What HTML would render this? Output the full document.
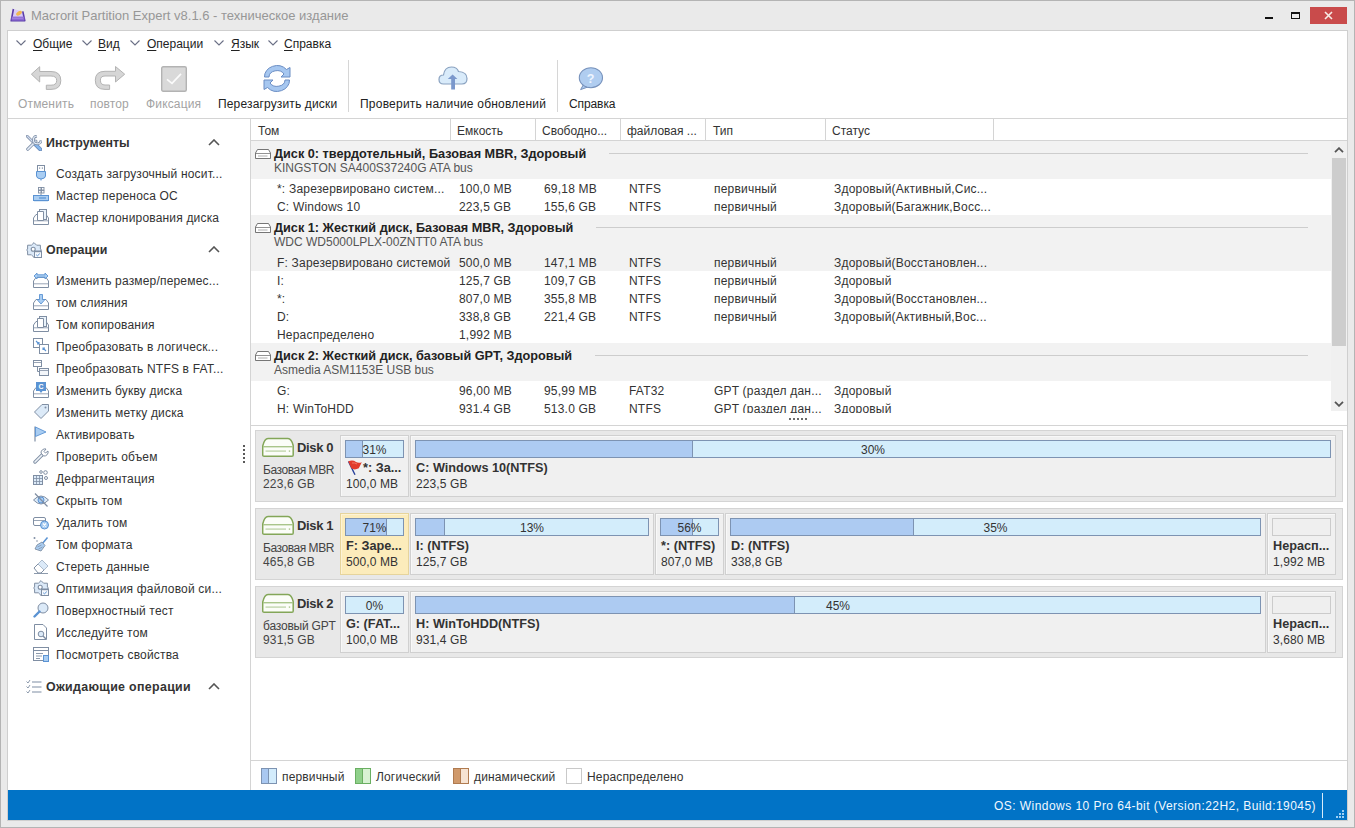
<!DOCTYPE html>
<html><head><meta charset="utf-8">
<style>
*{box-sizing:border-box;margin:0;padding:0}
html,body{width:1355px;height:828px;overflow:hidden;background:#eaeaea}
body{position:relative;font-family:"Liberation Sans",sans-serif;font-size:12px;color:#333}
.a{position:absolute;white-space:nowrap}
#frame{position:absolute;left:0;top:0;width:1355px;height:828px;border:1px solid #b4b4b4;background:#eaeaea}
#content{position:absolute;left:7px;top:30px;width:1341px;height:791px;border:1px solid #cfcfcf;background:#fff}
.title{left:31px;top:8px;font-size:13px;color:#979797}
.menu{top:37px;font-size:12px;color:#222}
.menu u{text-decoration:underline;text-decoration-thickness:1px;text-underline-offset:1.5px}
.chev{position:absolute;top:40px;width:10px;height:6px}
.tbl{top:97px;font-size:12px;color:#222;letter-spacing:.15px}
.tbl.dis{color:#a3a3a3}
.sep{position:absolute;width:1px;background:#d6d6d6}
.hl{position:absolute;height:1px;background:#d4d4d4}
.vl{position:absolute;width:1px;background:#d4d4d4}
.lp{font-size:12px;color:#333;letter-spacing:.18px}
.lph{font-size:12.4px;font-weight:bold;color:#333}
.th{top:124px;color:#333}
.dh{font-weight:bold;color:#222;font-size:12.7px}
.dsub{color:#555}
.c{color:#333;letter-spacing:.2px}
.part{background:#f0f0f0;border:1px solid #d0d0d0;box-shadow:inset 1px 1px 0 #f8f8f8}
.part.sel{background:#fcecbb;border-color:#e6d49c;box-shadow:inset 1px 1px 0 #fdf3d6}
</style></head><body>
<div id="frame"></div>
<div id="content"></div>

<svg class="a" style="left:10px;top:8px" width="16" height="14" viewBox="0 0 16 14">
<path d="M3.4 1 L1.2 12.8 H14.8 L12.8 3.4" fill="#d9ccf6" stroke="#5a3ca8" stroke-width="1.6" stroke-linejoin="round"/>
<ellipse cx="9" cy="5.2" rx="3.2" ry="1.9" transform="rotate(-35 9 5.2)" fill="#f0b850"/>
<rect x="1.6" y="8.6" width="12.8" height="4" fill="#8c6ad2"/>
<path d="M2 10.2 H13" stroke="#a88ae6" stroke-width="1"/>
</svg>
<div class="a title">Macrorit Partition Expert v8.1.6 - техническое издание</div>
<div class="a" style="left:1265px;top:17px;width:8px;height:2px;background:#111"></div>
<div class="a" style="left:1291px;top:12px;width:9px;height:7px;border:1px solid #111;border-top:2px solid #111"></div>
<div class="a" style="left:1310px;top:7px;width:37px;height:17px;background:#c94b4b"></div>
<svg class="a" style="left:1323px;top:10px" width="11" height="11" viewBox="0 0 11 11"><path d="M2 2 L9 9 M9 2 L2 9" stroke="#f7ece6" stroke-width="1.6"/></svg>

<svg class="chev" style="left:16px" viewBox="0 0 10 6"><path d="M.5 .5 L5 5 L9.5 .5" fill="none" stroke="#6a6f85" stroke-width="1.1"/></svg>
<div class="a menu" style="left:33px"><u>О</u>бщие</div>
<svg class="chev" style="left:82px" viewBox="0 0 10 6"><path d="M.5 .5 L5 5 L9.5 .5" fill="none" stroke="#6a6f85" stroke-width="1.1"/></svg>
<div class="a menu" style="left:98px"><u>В</u>ид</div>
<svg class="chev" style="left:130px" viewBox="0 0 10 6"><path d="M.5 .5 L5 5 L9.5 .5" fill="none" stroke="#6a6f85" stroke-width="1.1"/></svg>
<div class="a menu" style="left:147px"><u>О</u>перации</div>
<svg class="chev" style="left:214px" viewBox="0 0 10 6"><path d="M.5 .5 L5 5 L9.5 .5" fill="none" stroke="#6a6f85" stroke-width="1.1"/></svg>
<div class="a menu" style="left:231px"><u>Я</u>зык</div>
<svg class="chev" style="left:268px" viewBox="0 0 10 6"><path d="M.5 .5 L5 5 L9.5 .5" fill="none" stroke="#6a6f85" stroke-width="1.1"/></svg>
<div class="a menu" style="left:284px"><u>С</u>правка</div>
<svg class="a" style="left:30px;top:66px" width="34" height="26" viewBox="0 0 34 26">
<path d="M1.4 8.2 L9.7 0.7 V5.5 H21 Q30.8 5.5 30.8 14.5 Q30.8 23.4 21 23.4 H16.3 V19.2 H21 Q26.7 19.2 26.7 14.5 Q26.7 10 21 10 H9.7 V16 Z" fill="#d6d6d6" stroke="#b3b3b3" stroke-width="1"/>
</svg>
<svg class="a" style="left:93px;top:66px" width="34" height="26" viewBox="0 0 34 26">
<path d="M31.7 8.2 L22.5 0.5 V5.3 H12 Q2.3 5.3 2.3 14.2 Q2.3 23.4 12 23.4 H16.6 V19 H12 Q7.4 19 7.4 14.2 Q7.4 10 12 10 H22.5 V16 Z" fill="#d6d6d6" stroke="#b3b3b3" stroke-width="1"/>
</svg>
<svg class="a" style="left:161px;top:66px" width="26" height="26" viewBox="0 0 26 26">
<rect x="0.7" y="0.7" width="24.6" height="24.6" rx="1.5" fill="#d9d9d9" stroke="#b3b3b3" stroke-width="1.4"/>
<path d="M6 13.3 L11 17.4 L20 7.8" fill="none" stroke="#fbfbfb" stroke-width="1.7"/>
</svg>
<svg class="a" style="left:255px;top:60px" width="40" height="36" viewBox="0 0 40 36">
<path d="M9.5 17 A12.5 11 0 0 1 31.5 9.5 L35 7.5 V17 H26 L29 14 A8 6.5 0 0 0 14 17 Z" fill="#a6c7f0" stroke="#6a8dc4" stroke-width="1"/>
<path d="M34.5 20 A12.5 11 0 0 1 12.5 27.5 L9 29.5 V20 H18 L15 23 A8 6.5 0 0 0 30 20 Z" fill="#a6c7f0" stroke="#6a8dc4" stroke-width="1"/>
</svg>
<svg class="a" style="left:438px;top:66px" width="32" height="26" viewBox="0 0 32 26">
<path d="M5.5 18 Q1 18 1 13.5 Q1 9 5.5 9 Q6.5 1 13.5 1 Q19 1 20.5 5.5 Q29 6 29 12.5 Q29 18 24 18 Z" fill="#d9ebfa" stroke="#8aa2c0" stroke-width="1.2"/>
<path d="M14.6 8.5 L9.8 12.9 H13.2 V23.4 H17 V12.9 H19.4 Z" fill="#7b98cc"/>
</svg>
<svg class="a" style="left:577px;top:66px" width="28" height="26" viewBox="0 0 28 26">
<path d="M6.5 18.5 L3.6 23.6 L11.5 20.8 Z" fill="#a9c7ee" stroke="#7792bc" stroke-width="1"/>
<ellipse cx="13.9" cy="11.7" rx="11.6" ry="10" fill="#b0cdf0" stroke="#7792bc" stroke-width="1.1"/>
<path d="M7 18 L11.8 20.2" stroke="#b0cdf0" stroke-width="2"/>
<text x="13.5" y="16.5" text-anchor="middle" font-family="Liberation Sans" font-weight="bold" font-size="12.5" fill="#eef5ff">?</text>
</svg>
<div class="a tbl dis" style="left:18px">Отменить</div>
<div class="a tbl dis" style="left:90px">повтор</div>
<div class="a tbl dis" style="left:146px">Фиксация</div>
<div class="a tbl" style="left:218px">Перезагрузить диски</div>
<div class="sep" style="left:348px;top:60px;height:52px"></div>
<div class="a tbl" style="left:360px;letter-spacing:.22px">Проверить наличие обновлений</div>
<div class="sep" style="left:557px;top:60px;height:52px"></div>
<div class="a tbl" style="left:569px;letter-spacing:-.1px">Справка</div>
<div class="hl" style="left:8px;top:118px;width:1339px"></div>
<div class="vl" style="left:250px;top:119px;height:671px"></div>

<svg class="a" style="left:26px;top:135px" width="16" height="16" viewBox="0 0 16 16"><path d="M1.2 1.2 L7.5 7.5" stroke="#8494ab" stroke-width="2.8" stroke-linecap="round"/><path d="M1.2 1.2 L7.5 7.5" stroke="#d3def3" stroke-width="1.2" stroke-linecap="round"/><path d="M8.5 8.5 L14.3 14.3" stroke="#6f8fbd" stroke-width="4" stroke-linecap="round"/><path d="M8.5 8.5 L14.3 14.3" stroke="#86b8ee" stroke-width="2.3" stroke-linecap="round"/><path d="M1.8 14.2 L9.8 6.2" stroke="#8494ab" stroke-width="3.2" stroke-linecap="round"/><path d="M1.8 14.2 L9.8 6.2" stroke="#e6eef9" stroke-width="1.6" stroke-linecap="round"/><path d="M11 1 A3.9 3.9 0 1 0 15.2 5.2" fill="none" stroke="#8494ab" stroke-width="2.8"/><path d="M11 1 A3.9 3.9 0 1 0 15.2 5.2" fill="none" stroke="#e6eef9" stroke-width="1.1"/></svg>
<div class="a lph" style="left:46px;top:136px;letter-spacing:0px">Инструменты</div>
<svg class="a" style="left:208px;top:139px" width="12" height="7" viewBox="0 0 12 7"><path d="M1 6 L6 1 L11 6" fill="none" stroke="#555" stroke-width="1.6"/></svg>
<svg class="a" style="left:33px;top:165px" width="16" height="16" viewBox="0 0 16 16"><rect x="4.5" y="0.5" width="7" height="6" fill="#fff" stroke="#7f8ea3"/><rect x="6" y="2.5" width="1.2" height="1.2" fill="#7f8ea3"/><rect x="8.8" y="2.5" width="1.2" height="1.2" fill="#7f8ea3"/><path d="M3.5 6.5 H12.5 V11 Q12.5 13.5 8 14 Q3.5 13.5 3.5 11 Z" fill="#a9cdf2" stroke="#5b93d3"/><path d="M8 14 V15.5" stroke="#5b93d3"/></svg>
<div class="a lp" style="left:56px;top:167px">Создать загрузочный носит...</div>
<svg class="a" style="left:33px;top:187px" width="16" height="16" viewBox="0 0 16 16"><rect x="5.5" y="0.5" width="2.5" height="2.5" fill="#fff" stroke="#7f8ea3" stroke-width=".9"/><rect x="8.5" y="0.5" width="2.5" height="2.5" fill="#fff" stroke="#7f8ea3" stroke-width=".9"/><rect x="5.5" y="3.5" width="2.5" height="2.5" fill="#fff" stroke="#7f8ea3" stroke-width=".9"/><rect x="8.5" y="3.5" width="2.5" height="2.5" fill="#fff" stroke="#7f8ea3" stroke-width=".9"/><path d="M8 6.5 V8.5" stroke="#7f8ea3"/><rect x="0.5" y="8.5" width="15" height="5" fill="#a9cdf2" stroke="#5b93d3"/><path d="M6 11 H13" stroke="#5b93d3" stroke-width="1.2"/><path d="M1 14.5 H15" stroke="#dceaf8"/></svg>
<div class="a lp" style="left:56px;top:189px">Мастер переноса ОС</div>
<svg class="a" style="left:33px;top:209px" width="16" height="16" viewBox="0 0 16 16"><path d="M0.5 9 L3 5.5 H13 L15.5 9 V15.5 H0.5 Z" fill="#fff" stroke="#7f8ea3"/><path d="M1 11.8 H15" stroke="#7f8ea3" stroke-width=".8"/><rect x="6.5" y="0.5" width="7" height="10" fill="#eaf3fb" stroke="#7f8ea3"/><path d="M4.5 2.5 H10.5 V11.5 H4.5 Z" fill="#fff" stroke="#7f8ea3"/></svg>
<div class="a lp" style="left:56px;top:211px">Мастер клонирования диска</div>
<svg class="a" style="left:26px;top:242px" width="16" height="16" viewBox="0 0 16 16"><path d="M8 0.6 L10.6 3.2 H14.4 V7 L15.4 8 L14.4 9 V12.8 H10.6 L8 15.4 L5.4 12.8 H1.6 V9 L0.6 8 L1.6 7 V3.2 H5.4 Z" fill="#dbe9f8" stroke="#7f8ea3" stroke-width="1"/><circle cx="7.2" cy="7.2" r="2" fill="#fff" stroke="#7f8ea3" stroke-width="1.1"/><rect x="8.5" y="9" width="7" height="6.5" fill="#f4f8fd" stroke="#7f8ea3"/><path d="M8.5 9.6 H15.5" stroke="#7f8ea3" stroke-width="1.2"/><path d="M10.2 12.8 L11.5 13.8 L13.8 11.6" fill="none" stroke="#5b93d3" stroke-width="1"/></svg>
<div class="a lph" style="left:46px;top:243px;letter-spacing:0px">Операции</div>
<svg class="a" style="left:208px;top:246px" width="12" height="7" viewBox="0 0 12 7"><path d="M1 6 L6 1 L11 6" fill="none" stroke="#555" stroke-width="1.6"/></svg>
<svg class="a" style="left:33px;top:272px" width="16" height="16" viewBox="0 0 16 16"><path d="M0.5 9 L3 5.5 H13 L15.5 9 V15.5 H0.5 Z" fill="#fff" stroke="#7f8ea3"/><path d="M1 11.8 H15" stroke="#7f8ea3" stroke-width=".8"/><path d="M1 4 L4 1 V2.8 H12 V1 L15 4 L12 7 V5.2 H4 V7 Z" fill="#a9cdf2" stroke="#5b93d3" stroke-width=".9"/></svg>
<div class="a lp" style="left:56px;top:274px">Изменить размер/перемес...</div>
<svg class="a" style="left:33px;top:294px" width="16" height="16" viewBox="0 0 16 16"><path d="M0.5 9 L3 5.5 H13 L15.5 9 V15.5 H0.5 Z" fill="#fff" stroke="#7f8ea3"/><path d="M1 11.8 H15" stroke="#7f8ea3" stroke-width=".8"/><path d="M6.5 0.5 H9.5 V5.5 H12 L8 10 L4 5.5 H6.5 Z" fill="#a9cdf2" stroke="#5b93d3" stroke-width=".9"/></svg>
<div class="a lp" style="left:56px;top:296px">том слияния</div>
<svg class="a" style="left:33px;top:316px" width="16" height="16" viewBox="0 0 16 16"><path d="M0.5 9 L3 5.5 H13 L15.5 9 V15.5 H0.5 Z" fill="#fff" stroke="#7f8ea3"/><path d="M1 11.8 H15" stroke="#7f8ea3" stroke-width=".8"/><rect x="6.5" y="0.5" width="7" height="10" fill="#eaf3fb" stroke="#7f8ea3"/><path d="M4.5 2.5 H10.5 V11.5 H4.5 Z" fill="#fff" stroke="#7f8ea3"/></svg>
<div class="a lp" style="left:56px;top:318px">Том копирования</div>
<svg class="a" style="left:33px;top:338px" width="16" height="16" viewBox="0 0 16 16"><rect x="0.5" y="0.5" width="9" height="9" fill="#fff" stroke="#7f8ea3"/><rect x="6.5" y="6.5" width="9" height="9" fill="#fff" stroke="#7f8ea3"/><path d="M3 3 L6 6 M6 4 V6 H4" fill="none" stroke="#5b93d3" stroke-width="1.1"/><path d="M13 13 L10 10 M10 12 V10 H12" fill="none" stroke="#5b93d3" stroke-width="1.1"/></svg>
<div class="a lp" style="left:56px;top:340px">Преобразовать в логическ...</div>
<svg class="a" style="left:33px;top:360px" width="16" height="16" viewBox="0 0 16 16"><rect x="0.5" y="0.5" width="8" height="6" fill="#fff" stroke="#7f8ea3"/><path d="M1 2.5 H8" stroke="#7f8ea3" stroke-width=".8"/><path d="M4.5 7 V11.5 H6.5" fill="none" stroke="#7f8ea3"/><rect x="6.5" y="8.5" width="9" height="7" fill="#f3f6fa" stroke="#7f8ea3"/><path d="M7 10.5 H15" stroke="#7f8ea3" stroke-width=".8"/></svg>
<div class="a lp" style="left:56px;top:362px">Преобразовать NTFS в FAT...</div>
<svg class="a" style="left:33px;top:382px" width="16" height="16" viewBox="0 0 16 16"><path d="M0.5 9 L3 5.5 H13 L15.5 9 V15.5 H0.5 Z" fill="#fff" stroke="#7f8ea3"/><path d="M1 11.8 H15" stroke="#7f8ea3" stroke-width=".8"/><rect x="3.5" y="0.5" width="9" height="8" fill="#5b93d3" stroke="#5b93d3"/><path d="M6.5 9 L8 11 L9.5 9 Z" fill="#5b93d3"/><text x="8" y="7" text-anchor="middle" font-family="Liberation Sans" font-size="7" font-weight="bold" fill="#fff">C</text></svg>
<div class="a lp" style="left:56px;top:384px">Изменить букву диска</div>
<svg class="a" style="left:33px;top:404px" width="16" height="16" viewBox="0 0 16 16"><path d="M9 0.5 H15.5 V7 L8 14.5 L1.5 8 Z" fill="#dceaf8" stroke="#7f8ea3"/><circle cx="12.5" cy="3.5" r="1" fill="#7f8ea3"/></svg>
<div class="a lp" style="left:56px;top:406px">Изменить метку диска</div>
<svg class="a" style="left:33px;top:426px" width="16" height="16" viewBox="0 0 16 16"><path d="M2 0.5 V15.5" stroke="#7f8ea3" stroke-width="1.2"/><path d="M2.5 1 L13 6 L2.5 10.5 Z" fill="#a9cdf2" stroke="#5b93d3" stroke-width=".9"/></svg>
<div class="a lp" style="left:56px;top:428px">Активировать</div>
<svg class="a" style="left:33px;top:448px" width="16" height="16" viewBox="0 0 16 16"><path d="M2 14 L9 7" stroke="#7f8ea3" stroke-width="3.4" stroke-linecap="round"/><path d="M2 14 L9 7" stroke="#eef3f8" stroke-width="1.6" stroke-linecap="round"/><path d="M8 5 A4 4 0 0 1 13 1 L11 3.5 L12.5 5 L15 3 A4 4 0 0 1 10.5 8 Z" fill="#fff" stroke="#7f8ea3"/></svg>
<div class="a lp" style="left:56px;top:450px">Проверить объем</div>
<svg class="a" style="left:33px;top:470px" width="16" height="16" viewBox="0 0 16 16"><rect x="0.5" y="5.5" width="9" height="9" fill="#dceaf8" stroke="#7f8ea3"/><path d="M3.5 5.5 V14.5 M6.5 5.5 V14.5 M0.5 8.5 H9.5 M0.5 11.5 H9.5" stroke="#7f8ea3" stroke-width=".8"/><circle cx="12.5" cy="2.5" r="1.8" fill="#fff" stroke="#7f8ea3"/><circle cx="8" cy="2" r="1.3" fill="#fff" stroke="#7f8ea3"/><circle cx="13" cy="8" r="1.5" fill="#fff" stroke="#7f8ea3"/></svg>
<div class="a lp" style="left:56px;top:472px">Дефрагментация</div>
<svg class="a" style="left:33px;top:492px" width="16" height="16" viewBox="0 0 16 16"><path d="M0.5 8 Q8 0 15.5 8 Q8 16 0.5 8 Z" fill="#dceaf8" stroke="#7f8ea3"/><circle cx="8" cy="8" r="3" fill="#a9cdf2" stroke="#5b93d3"/><path d="M2 1.5 L14.5 14.5" stroke="#7f8ea3" stroke-width="1.2"/></svg>
<div class="a lp" style="left:56px;top:494px">Скрыть том</div>
<svg class="a" style="left:33px;top:514px" width="16" height="16" viewBox="0 0 16 16"><rect x="0.5" y="3.5" width="12" height="8" rx="1.5" fill="#fff" stroke="#7f8ea3"/><path d="M1 6.5 H12" stroke="#7f8ea3" stroke-width=".8"/><circle cx="11.5" cy="11" r="4" fill="#a9cdf2" stroke="#5b93d3"/><path d="M10 9.5 L13 12.5 M13 9.5 L10 12.5" stroke="#fff" stroke-width="1.1"/></svg>
<div class="a lp" style="left:56px;top:516px">Удалить том</div>
<svg class="a" style="left:33px;top:536px" width="16" height="16" viewBox="0 0 16 16"><path d="M9 8 L14.5 1.5" stroke="#5b93d3" stroke-width="1.5"/><path d="M4 9 L9 6 L12 9.5 L8 15 L2 13 Z" fill="#a9cdf2" stroke="#7f8ea3" stroke-width=".9"/><path d="M4.5 11 L8.5 9 M5.5 13 L9.5 11" stroke="#7f8ea3" stroke-width=".7"/><circle cx="1.5" cy="2" r="1" fill="#7f8ea3"/><circle cx="4" cy="5" r=".8" fill="#7f8ea3"/></svg>
<div class="a lp" style="left:56px;top:538px">Том формата</div>
<svg class="a" style="left:33px;top:558px" width="16" height="16" viewBox="0 0 16 16"><path d="M1 10 L9 2 L15 8 L8 15 H5 Z" fill="#fff" stroke="#7f8ea3"/><path d="M5 6 L11 12" stroke="#7f8ea3"/><path d="M9 2 L15 8 L11 12 L5 6 Z" fill="#dceaf8"/><path d="M1 15.5 H15" stroke="#7f8ea3" stroke-width=".9"/></svg>
<div class="a lp" style="left:56px;top:560px">Стереть данные</div>
<svg class="a" style="left:33px;top:580px" width="16" height="16" viewBox="0 0 16 16"><path d="M8 0.6 L10.6 3.2 H14.4 V7 L15.4 8 L14.4 9 V12.8 H10.6 L8 15.4 L5.4 12.8 H1.6 V9 L0.6 8 L1.6 7 V3.2 H5.4 Z" fill="#dbe9f8" stroke="#7f8ea3" stroke-width="1"/><circle cx="7.2" cy="7.2" r="2" fill="#fff" stroke="#7f8ea3" stroke-width="1.1"/><rect x="8.5" y="9" width="7" height="6.5" fill="#f4f8fd" stroke="#7f8ea3"/><path d="M8.5 9.6 H15.5" stroke="#7f8ea3" stroke-width="1.2"/><path d="M10.2 12.8 L11.5 13.8 L13.8 11.6" fill="none" stroke="#5b93d3" stroke-width="1"/></svg>
<div class="a lp" style="left:56px;top:582px">Оптимизация файловой си...</div>
<svg class="a" style="left:33px;top:602px" width="16" height="16" viewBox="0 0 16 16"><circle cx="10" cy="6" r="5" fill="#dceaf8" stroke="#7f8ea3"/><path d="M6.5 9.5 L1.5 14.5" stroke="#5b93d3" stroke-width="2.4" stroke-linecap="round"/></svg>
<div class="a lp" style="left:56px;top:604px">Поверхностный тест</div>
<svg class="a" style="left:33px;top:624px" width="16" height="16" viewBox="0 0 16 16"><path d="M1.5 0.5 H10 L13.5 4 V15.5 H1.5 Z" fill="#fff" stroke="#7f8ea3"/><circle cx="8" cy="10" r="2.8" fill="#dceaf8" stroke="#7f8ea3"/><path d="M10 12 L13 15" stroke="#7f8ea3" stroke-width="1.4"/></svg>
<div class="a lp" style="left:56px;top:626px">Исследуйте том</div>
<svg class="a" style="left:33px;top:646px" width="16" height="16" viewBox="0 0 16 16"><rect x="0.5" y="1.5" width="15" height="13" fill="#fff" stroke="#7f8ea3"/><path d="M0.5 4.5 H15.5" stroke="#7f8ea3"/><path d="M3 7.5 H10 M3 10 H9 M3 12.5 H7" stroke="#7f8ea3" stroke-width=".9"/><rect x="10.5" y="9.5" width="5" height="6" fill="#a9cdf2" stroke="#5b93d3"/></svg>
<div class="a lp" style="left:56px;top:648px">Посмотреть свойства</div>
<svg class="a" style="left:26px;top:679px" width="16" height="16" viewBox="0 0 16 16"><path d="M0.5 2.5 L2 4 L4 1 M0.5 7.5 L2 9 L4 6 M0.5 12.5 L2 14 L4 11" fill="none" stroke="#7f8ea3" stroke-width=".9"/><path d="M6 3 H15.5 M6 8 H15.5 M6 13 H15.5" stroke="#7f8ea3" stroke-width="1.1"/></svg>
<div class="a lph" style="left:46px;top:680px;letter-spacing:0.33px">Ожидающие операции</div>
<svg class="a" style="left:208px;top:683px" width="12" height="7" viewBox="0 0 12 7"><path d="M1 6 L6 1 L11 6" fill="none" stroke="#555" stroke-width="1.6"/></svg>
<div class="a" style="left:243px;top:445px;width:2px;height:18px;background:repeating-linear-gradient(180deg,#595959 0 2px,transparent 2px 4px)"></div>
<div class="a th" style="left:258px">Том</div>
<div class="a th" style="left:457px">Емкость</div>
<div class="a th" style="left:542px">Свободно...</div>
<div class="a th" style="left:627px">файловая ...</div>
<div class="a th" style="left:713px">Тип</div>
<div class="a th" style="left:832px">Статус</div>
<div class="vl" style="left:450px;top:119px;height:21px"></div>
<div class="vl" style="left:535px;top:119px;height:21px"></div>
<div class="vl" style="left:620px;top:119px;height:21px"></div>
<div class="vl" style="left:705px;top:119px;height:21px"></div>
<div class="vl" style="left:825px;top:119px;height:21px"></div>
<div class="vl" style="left:993px;top:119px;height:21px"></div>
<div class="hl" style="left:251px;top:140px;width:1096px"></div>
<div class="a" style="left:251px;top:141px;width:1080px;height:38px;background:#f2f2f2"></div>
<svg class="a" style="left:255px;top:149px" width="16" height="10" viewBox="0 0 16 10"><path d="M0.5 4 L2.5 0.5 H13.5 L15.5 4 V9.5 H0.5 Z" fill="#fff" stroke="#666" stroke-width=".9"/><path d="M0.8 4.5 H15.2" stroke="#777" stroke-width=".8"/><path d="M3 7 H12.5" stroke="#999" stroke-width=".8"/></svg>
<div class="a dh" style="left:274px;top:147px">Диск 0: твердотельный, Базовая MBR, Здоровый</div>
<div class="a dsub" style="left:274px;top:161px">KINGSTON SA400S37240G ATA bus</div>
<div class="hl" style="left:609px;top:153px;width:699px;background:#cdcdcd"></div>
<div class="a c" style="left:277px;top:182px">*: Зарезервировано систем...</div>
<div class="a c" style="left:459px;top:182px">100,0 MB</div>
<div class="a c" style="left:544px;top:182px">69,18 MB</div>
<div class="a c" style="left:629px;top:182px">NTFS</div>
<div class="a c" style="left:714px;top:182px">первичный</div>
<div class="a c" style="left:834px;top:182px">Здоровый(Активный,Сис...</div>
<div class="a c" style="left:277px;top:200px">C: Windows 10</div>
<div class="a c" style="left:459px;top:200px">223,5 GB</div>
<div class="a c" style="left:544px;top:200px">155,6 GB</div>
<div class="a c" style="left:629px;top:200px">NTFS</div>
<div class="a c" style="left:714px;top:200px">первичный</div>
<div class="a c" style="left:834px;top:200px">Здоровый(Багажник,Восс...</div>
<div class="a" style="left:251px;top:215px;width:1080px;height:38px;background:#f2f2f2"></div>
<svg class="a" style="left:255px;top:223px" width="16" height="10" viewBox="0 0 16 10"><path d="M0.5 4 L2.5 0.5 H13.5 L15.5 4 V9.5 H0.5 Z" fill="#fff" stroke="#666" stroke-width=".9"/><path d="M0.8 4.5 H15.2" stroke="#777" stroke-width=".8"/><path d="M3 7 H12.5" stroke="#999" stroke-width=".8"/></svg>
<div class="a dh" style="left:274px;top:221px">Диск 1: Жесткий диск, Базовая MBR, Здоровый</div>
<div class="a dsub" style="left:274px;top:235px">WDC WD5000LPLX-00ZNTT0 ATA bus</div>
<div class="hl" style="left:596px;top:227px;width:712px;background:#cdcdcd"></div>
<div class="a" style="left:251px;top:253px;width:1080px;height:18px;background:#f2f2f2"></div>
<div class="a c" style="left:277px;top:256px">F: Зарезервировано системой</div>
<div class="a c" style="left:459px;top:256px">500,0 MB</div>
<div class="a c" style="left:544px;top:256px">147,1 MB</div>
<div class="a c" style="left:629px;top:256px">NTFS</div>
<div class="a c" style="left:714px;top:256px">первичный</div>
<div class="a c" style="left:834px;top:256px">Здоровый(Восстановлен...</div>
<div class="a c" style="left:277px;top:274px">I:</div>
<div class="a c" style="left:459px;top:274px">125,7 GB</div>
<div class="a c" style="left:544px;top:274px">109,7 GB</div>
<div class="a c" style="left:629px;top:274px">NTFS</div>
<div class="a c" style="left:714px;top:274px">первичный</div>
<div class="a c" style="left:834px;top:274px">Здоровый</div>
<div class="a c" style="left:277px;top:292px">*:</div>
<div class="a c" style="left:459px;top:292px">807,0 MB</div>
<div class="a c" style="left:544px;top:292px">355,8 MB</div>
<div class="a c" style="left:629px;top:292px">NTFS</div>
<div class="a c" style="left:714px;top:292px">первичный</div>
<div class="a c" style="left:834px;top:292px">Здоровый(Восстановлен...</div>
<div class="a c" style="left:277px;top:310px">D:</div>
<div class="a c" style="left:459px;top:310px">338,8 GB</div>
<div class="a c" style="left:544px;top:310px">221,4 GB</div>
<div class="a c" style="left:629px;top:310px">NTFS</div>
<div class="a c" style="left:714px;top:310px">первичный</div>
<div class="a c" style="left:834px;top:310px">Здоровый(Активный,Вос...</div>
<div class="a c" style="left:277px;top:328px">Нераспределено</div>
<div class="a c" style="left:459px;top:328px">1,992 MB</div>
<div class="a" style="left:251px;top:343px;width:1080px;height:38px;background:#f2f2f2"></div>
<svg class="a" style="left:255px;top:351px" width="16" height="10" viewBox="0 0 16 10"><path d="M0.5 4 L2.5 0.5 H13.5 L15.5 4 V9.5 H0.5 Z" fill="#fff" stroke="#666" stroke-width=".9"/><path d="M0.8 4.5 H15.2" stroke="#777" stroke-width=".8"/><path d="M3 7 H12.5" stroke="#999" stroke-width=".8"/></svg>
<div class="a dh" style="left:274px;top:349px">Диск 2: Жесткий диск, базовый GPT, Здоровый</div>
<div class="a dsub" style="left:274px;top:363px">Asmedia ASM1153E USB bus</div>
<div class="hl" style="left:595px;top:355px;width:713px;background:#cdcdcd"></div>
<div class="a c" style="left:277px;top:384px">G:</div>
<div class="a c" style="left:459px;top:384px">96,00 MB</div>
<div class="a c" style="left:544px;top:384px">95,99 MB</div>
<div class="a c" style="left:629px;top:384px">FAT32</div>
<div class="a c" style="left:714px;top:384px">GPT (раздел дан...</div>
<div class="a c" style="left:834px;top:384px">Здоровый</div>
<div class="a c" style="left:277px;top:402px">H: WinToHDD</div>
<div class="a c" style="left:459px;top:402px">931.4 GB</div>
<div class="a c" style="left:544px;top:402px">513.0 GB</div>
<div class="a c" style="left:629px;top:402px">NTFS</div>
<div class="a c" style="left:714px;top:402px">GPT (раздел дан...</div>
<div class="a c" style="left:834px;top:402px">Здоровый</div>
<div class="a" style="left:1331px;top:141px;width:16px;height:270px;background:#f0f0f0"></div>
<div class="a" style="left:1332px;top:158px;width:14px;height:188px;background:#cdcdcd"></div>
<svg class="a" style="left:1334px;top:147px" width="10" height="6" viewBox="0 0 10 6"><path d="M1 5.2 L5 1.2 L9 5.2" fill="none" stroke="#555" stroke-width="1.8"/></svg>
<svg class="a" style="left:1334px;top:401px" width="10" height="6" viewBox="0 0 10 6"><path d="M1 .8 L5 4.8 L9 .8" fill="none" stroke="#555" stroke-width="1.8"/></svg>
<div class="a" style="left:251px;top:413px;width:1080px;height:5px;background:#fff"></div>
<div class="a" style="left:789px;top:418px;width:18px;height:2px;background:repeating-linear-gradient(90deg,#6a6a6a 0 2px,transparent 2px 4px)"></div>
<div class="hl" style="left:251px;top:425px;width:1096px"></div>
<div class="a" style="left:255px;top:430px;width:1088px;height:72px;background:#e8e8e8;border:1px solid #d4d4d4"></div>
<svg class="a" style="left:262px;top:437px" width="33" height="21" viewBox="0 0 33 21"><path d="M6 1.4 H26 Q29.5 1.4 31.2 8.5 V18 Q31.2 19.3 30 19.3 H2 Q0.7 19.3 0.7 18 V9 Q2.5 1.4 6 1.4 Z" fill="#fbfdf8" stroke="#83a658" stroke-width="1.5"/><path d="M1 9.7 H31" stroke="#a9c58a" stroke-width="1.4"/><path d="M3.5 14.1 H24" stroke="#c2d6ad" stroke-width="1.4"/><path d="M26.8 14.1 H28.2" stroke="#a9c58a" stroke-width="1.4"/></svg>
<div class="a" style="left:297px;top:440px;font-weight:bold;font-size:13px;color:#333;letter-spacing:-.35px">Disk 0</div>
<div class="a" style="left:263px;top:463px;color:#444;letter-spacing:-0.45px">Базовая MBR</div>
<div class="a" style="left:263px;top:477px;color:#444;letter-spacing:.15px">223,6 GB</div>
<div class="a part" style="left:340px;top:435px;width:69px;height:62px"></div>
<div class="a" style="left:345px;top:440px;width:59px;height:18px;background:#d3edfb;border:1px solid #7d93b2"></div>
<div class="a" style="left:346px;top:441px;width:16px;height:16px;background:#adcbf2"></div>
<div class="a" style="left:362px;top:441px;width:1px;height:16px;background:#7d93b2"></div>
<div class="a" style="left:345px;top:443px;width:59px;text-align:center;color:#333">31%</div>
<svg class="a" style="left:347px;top:460px" width="16" height="16" viewBox="0 0 16 16"><path d="M1.5 1.5 L8 14.8" stroke="#27409a" stroke-width="1.4"/><path d="M1.2 1.3 Q6 -0.5 9 2 Q11.5 3.5 14.8 2.3 L11.8 8.3 Q7.5 10.5 4.3 8.3 Z" fill="#e23b2b"/><path d="M5 3 Q8 2.5 10 4" stroke="#f07a6a" stroke-width="1" fill="none"/></svg>
<div class="a" style="left:363px;top:461px;font-weight:bold;font-size:12.7px;color:#333">*: За...</div>
<div class="a" style="left:346px;top:477px;color:#333;letter-spacing:.1px">100,0 MB</div>
<div class="a part" style="left:410px;top:435px;width:926px;height:62px"></div>
<div class="a" style="left:415px;top:440px;width:916px;height:18px;background:#d3edfb;border:1px solid #7d93b2"></div>
<div class="a" style="left:416px;top:441px;width:276px;height:16px;background:#adcbf2"></div>
<div class="a" style="left:692px;top:441px;width:1px;height:16px;background:#7d93b2"></div>
<div class="a" style="left:415px;top:443px;width:916px;text-align:center;color:#333">30%</div>
<div class="a" style="left:416px;top:461px;font-weight:bold;font-size:12.7px;color:#333">C: Windows 10(NTFS)</div>
<div class="a" style="left:416px;top:477px;color:#333;letter-spacing:.1px">223,5 GB</div>
<div class="a" style="left:255px;top:508px;width:1088px;height:72px;background:#e8e8e8;border:1px solid #d4d4d4"></div>
<svg class="a" style="left:262px;top:515px" width="33" height="21" viewBox="0 0 33 21"><path d="M6 1.4 H26 Q29.5 1.4 31.2 8.5 V18 Q31.2 19.3 30 19.3 H2 Q0.7 19.3 0.7 18 V9 Q2.5 1.4 6 1.4 Z" fill="#fbfdf8" stroke="#83a658" stroke-width="1.5"/><path d="M1 9.7 H31" stroke="#a9c58a" stroke-width="1.4"/><path d="M3.5 14.1 H24" stroke="#c2d6ad" stroke-width="1.4"/><path d="M26.8 14.1 H28.2" stroke="#a9c58a" stroke-width="1.4"/></svg>
<div class="a" style="left:297px;top:518px;font-weight:bold;font-size:13px;color:#333;letter-spacing:-.35px">Disk 1</div>
<div class="a" style="left:263px;top:541px;color:#444;letter-spacing:-0.45px">Базовая MBR</div>
<div class="a" style="left:263px;top:555px;color:#444;letter-spacing:.15px">465,8 GB</div>
<div class="a part sel" style="left:340px;top:513px;width:69px;height:62px"></div>
<div class="a" style="left:345px;top:518px;width:59px;height:18px;background:#d3edfb;border:1px solid #7d93b2"></div>
<div class="a" style="left:346px;top:519px;width:40px;height:16px;background:#adcbf2"></div>
<div class="a" style="left:386px;top:519px;width:1px;height:16px;background:#7d93b2"></div>
<div class="a" style="left:345px;top:521px;width:59px;text-align:center;color:#333">71%</div>
<div class="a" style="left:346px;top:539px;font-weight:bold;font-size:12.7px;color:#333">F: Заре...</div>
<div class="a" style="left:346px;top:555px;color:#333;letter-spacing:.1px">500,0 MB</div>
<div class="a part" style="left:410px;top:513px;width:244px;height:62px"></div>
<div class="a" style="left:415px;top:518px;width:234px;height:18px;background:#d3edfb;border:1px solid #7d93b2"></div>
<div class="a" style="left:416px;top:519px;width:28px;height:16px;background:#adcbf2"></div>
<div class="a" style="left:444px;top:519px;width:1px;height:16px;background:#7d93b2"></div>
<div class="a" style="left:415px;top:521px;width:234px;text-align:center;color:#333">13%</div>
<div class="a" style="left:416px;top:539px;font-weight:bold;font-size:12.7px;color:#333">I: (NTFS)</div>
<div class="a" style="left:416px;top:555px;color:#333;letter-spacing:.1px">125,7 GB</div>
<div class="a part" style="left:655px;top:513px;width:69px;height:62px"></div>
<div class="a" style="left:660px;top:518px;width:59px;height:18px;background:#d3edfb;border:1px solid #7d93b2"></div>
<div class="a" style="left:661px;top:519px;width:31px;height:16px;background:#adcbf2"></div>
<div class="a" style="left:692px;top:519px;width:1px;height:16px;background:#7d93b2"></div>
<div class="a" style="left:660px;top:521px;width:59px;text-align:center;color:#333">56%</div>
<div class="a" style="left:661px;top:539px;font-weight:bold;font-size:12.7px;color:#333">*: (NTFS)</div>
<div class="a" style="left:661px;top:555px;color:#333;letter-spacing:.1px">807,0 MB</div>
<div class="a part" style="left:725px;top:513px;width:541px;height:62px"></div>
<div class="a" style="left:730px;top:518px;width:531px;height:18px;background:#d3edfb;border:1px solid #7d93b2"></div>
<div class="a" style="left:731px;top:519px;width:182px;height:16px;background:#adcbf2"></div>
<div class="a" style="left:913px;top:519px;width:1px;height:16px;background:#7d93b2"></div>
<div class="a" style="left:730px;top:521px;width:531px;text-align:center;color:#333">35%</div>
<div class="a" style="left:731px;top:539px;font-weight:bold;font-size:12.7px;color:#333">D: (NTFS)</div>
<div class="a" style="left:731px;top:555px;color:#333;letter-spacing:.1px">338,8 GB</div>
<div class="a part" style="left:1267px;top:513px;width:69px;height:62px"></div>
<div class="a" style="left:1272px;top:518px;width:59px;height:18px;background:#efefef;border:1px solid #cbcbcb"></div>
<div class="a" style="left:1273px;top:539px;font-weight:bold;font-size:12.7px;color:#333">Нерасп...</div>
<div class="a" style="left:1273px;top:555px;color:#333;letter-spacing:.1px">1,992 MB</div>
<div class="a" style="left:255px;top:586px;width:1088px;height:72px;background:#e8e8e8;border:1px solid #d4d4d4"></div>
<svg class="a" style="left:262px;top:593px" width="33" height="21" viewBox="0 0 33 21"><path d="M6 1.4 H26 Q29.5 1.4 31.2 8.5 V18 Q31.2 19.3 30 19.3 H2 Q0.7 19.3 0.7 18 V9 Q2.5 1.4 6 1.4 Z" fill="#fbfdf8" stroke="#83a658" stroke-width="1.5"/><path d="M1 9.7 H31" stroke="#a9c58a" stroke-width="1.4"/><path d="M3.5 14.1 H24" stroke="#c2d6ad" stroke-width="1.4"/><path d="M26.8 14.1 H28.2" stroke="#a9c58a" stroke-width="1.4"/></svg>
<div class="a" style="left:297px;top:596px;font-weight:bold;font-size:13px;color:#333;letter-spacing:-.35px">Disk 2</div>
<div class="a" style="left:263px;top:619px;color:#444;letter-spacing:-0.2px">базовый GPT</div>
<div class="a" style="left:263px;top:633px;color:#444;letter-spacing:.15px">931,5 GB</div>
<div class="a part" style="left:340px;top:591px;width:69px;height:62px"></div>
<div class="a" style="left:345px;top:596px;width:59px;height:18px;background:#d3edfb;border:1px solid #7d93b2"></div>
<div class="a" style="left:346px;top:597px;width:-1px;height:16px;background:#adcbf2"></div>
<div class="a" style="left:345px;top:599px;width:59px;text-align:center;color:#333">0%</div>
<div class="a" style="left:346px;top:617px;font-weight:bold;font-size:12.7px;color:#333">G: (FAT...</div>
<div class="a" style="left:346px;top:633px;color:#333;letter-spacing:.1px">100,0 MB</div>
<div class="a part" style="left:410px;top:591px;width:856px;height:62px"></div>
<div class="a" style="left:415px;top:596px;width:846px;height:18px;background:#d3edfb;border:1px solid #7d93b2"></div>
<div class="a" style="left:416px;top:597px;width:378px;height:16px;background:#adcbf2"></div>
<div class="a" style="left:794px;top:597px;width:1px;height:16px;background:#7d93b2"></div>
<div class="a" style="left:415px;top:599px;width:846px;text-align:center;color:#333">45%</div>
<div class="a" style="left:416px;top:617px;font-weight:bold;font-size:12.7px;color:#333">H: WinToHDD(NTFS)</div>
<div class="a" style="left:416px;top:633px;color:#333;letter-spacing:.1px">931,4 GB</div>
<div class="a part" style="left:1267px;top:591px;width:69px;height:62px"></div>
<div class="a" style="left:1272px;top:596px;width:59px;height:18px;background:#efefef;border:1px solid #cbcbcb"></div>
<div class="a" style="left:1273px;top:617px;font-weight:bold;font-size:12.7px;color:#333">Нерасп...</div>
<div class="a" style="left:1273px;top:633px;color:#333;letter-spacing:.1px">3,680 MB</div>
<div class="hl" style="left:251px;top:760px;width:1096px"></div>
<div class="a" style="left:261px;top:768px;width:16px;height:16px;border:1px solid #7d93b2;background:linear-gradient(90deg,#a9c8f1 0 6px,#7d93b2 6px 7px,#d3ecfc 7px)"></div>
<div class="a" style="left:282px;top:770px;color:#333;letter-spacing:.15px">первичный</div>
<div class="a" style="left:355px;top:768px;width:16px;height:16px;border:1px solid #6aaf62;background:linear-gradient(90deg,#8fd08a 0 6px,#6aaf62 6px 7px,#d8f2d3 7px)"></div>
<div class="a" style="left:376px;top:770px;color:#333;letter-spacing:.15px">Логический</div>
<div class="a" style="left:453px;top:768px;width:16px;height:16px;border:1px solid #b07b50;background:linear-gradient(90deg,#d09a6c 0 6px,#b07b50 6px 7px,#f6e3d2 7px)"></div>
<div class="a" style="left:474px;top:770px;color:#333;letter-spacing:.15px">динамический</div>
<div class="a" style="left:566px;top:768px;width:16px;height:16px;border:1px solid #c9c9c9;background:#fff"></div>
<div class="a" style="left:587px;top:770px;color:#333;letter-spacing:.15px">Нераспределено</div>
<div class="a" style="left:8px;top:790px;width:1339px;height:30px;background:#0173c6"></div>
<div class="a" style="left:994px;top:799px;color:#f0f8ff;font-size:12px;letter-spacing:.45px">OS: Windows 10 Pro 64-bit (Version:22H2, Build:19045)</div>
<div class="a" style="left:1322px;top:793px;width:1px;height:25px;background:#d8ecfa"></div>
<svg class="a" style="left:1336px;top:810px" width="10" height="10" viewBox="0 0 10 10"><g fill="#9fd0f5"><rect x="6" y="0" width="2" height="2"/><rect x="3" y="3" width="2" height="2"/><rect x="6" y="3" width="2" height="2"/><rect x="0" y="6" width="2" height="2"/><rect x="3" y="6" width="2" height="2"/><rect x="6" y="6" width="2" height="2"/></g></svg>
</body></html>
